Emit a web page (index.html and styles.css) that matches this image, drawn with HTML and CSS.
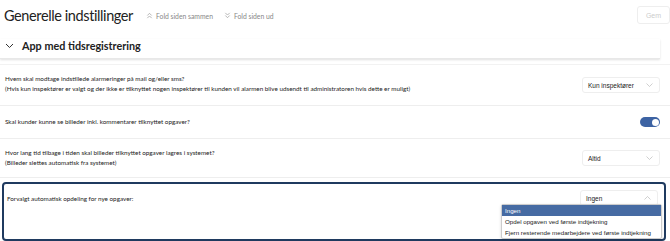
FILE: index.html
```html
<!DOCTYPE html>
<html lang="da">

<head>
    <meta charset="UTF-8">
    <meta name="viewport" content="width=device-width, initial-scale=1.0">
    <title>Generelle indstillinger</title>
    <link rel="stylesheet" href="styles.css">
</head>

<body>
    <div class="page-header">
        <h1>Generelle indstillinger</h1>
        <span class="fold-link">
            <svg width="7" height="7" viewBox="0 0 8 8"><path d="M1.5 4 L4 1.5 L6.5 4 M1.5 7 L4 4.5 L6.5 7" fill="none" stroke="#999" stroke-width="0.8"/></svg>
            Fold siden sammen
        </span>
        <span class="fold-link">
            <svg width="7" height="7" viewBox="0 0 8 8"><path d="M1.5 1 L4 3.5 L6.5 1 M1.5 4 L4 6.5 L6.5 4" fill="none" stroke="#999" stroke-width="0.8"/></svg>
            Fold siden ud
        </span>
        <button class="save-button">Gem</button>
    </div>

    <div class="section">
        <div class="section-header">
            <svg class="section-chevron" width="9" height="6" viewBox="0 0 9 6"><path d="M1 1 L4.5 4.5 L8 1" fill="none" stroke="#333" stroke-width="1"/></svg>
            <h2>App med tidsregistrering</h2>
        </div>

        <div class="setting-row row-first">
            <div class="setting-text">
                <p>Hvem skal modtage indstillede alarmeringer på mail og/eller sms?</p>
                <p>(Hvis kun inspektører er valgt og der ikke er tilknyttet nogen inspektører til kunden vil alarmen blive udsendt til administratoren hvis dette er muligt)</p>
            </div>
            <div class="select">
                <span>Kun inspektører</span>
                <svg width="7" height="4" viewBox="0 0 7 4"><path d="M0.5 0.5 L3.5 3.5 L6.5 0.5" fill="none" stroke="#bbb" stroke-width="0.7"/></svg>
            </div>
        </div>

        <div class="setting-row row-short">
            <div class="setting-text">
                <p>Skal kunder kunne se billeder inkl. kommentarer tilknyttet opgaver?</p>
            </div>
            <div class="toggle"><div class="toggle-knob"></div></div>
        </div>

        <div class="setting-row row-tall">
            <div class="setting-text">
                <p>Hvor lang tid tilbage i tiden skal billeder tilknyttet opgaver lagres i systemet?</p>
                <p>(Billeder slettes automatisk fra systemet)</p>
            </div>
            <div class="select">
                <span>Altid</span>
                <svg width="7" height="4" viewBox="0 0 7 4"><path d="M0.5 0.5 L3.5 3.5 L6.5 0.5" fill="none" stroke="#bbb" stroke-width="0.7"/></svg>
            </div>
        </div>

        <div class="setting-row row-active">
            <div class="setting-text">
                <p>Forvalgt automatisk opdeling for nye opgaver:</p>
            </div>
            <div class="select">
                <span>Ingen</span>
                <svg width="7" height="4" viewBox="0 0 7 4"><path d="M0.5 3.5 L3.5 0.5 L6.5 3.5" fill="none" stroke="#bbb" stroke-width="0.7"/></svg>
            </div>
            <ul class="dropdown">
                <li class="selected">Ingen</li>
                <li>Opdel opgaven ved første indtjekning</li>
                <li>Fjern resterende medarbejdere ved første indtjekning</li>
            </ul>
        </div>
    </div>
</body>

</html>
```

FILE: styles.css
```css
body {
    margin: 0;
    font-family: Lato, "Open Sans", sans-serif;
    color: #222;
    background: white;
    width: 670px;
    height: 241px;
    overflow: hidden;
}

.page-header {
    display: flex;
    align-items: center;
    gap: 11px;
    padding: 6px 0 0 4px;
    height: 18px;
}

h1 {
    margin: 0 2px 0 0;
    font-size: 14.5px;
    font-weight: 400;
    letter-spacing: -0.4px;
    color: #222;
}

.fold-link {
    display: flex;
    align-items: center;
    gap: 3px;
    font-size: 6.8px;
    color: #888;
    margin-top: 1px;
}

.save-button {
    margin-left: auto;
    font-family: "Liberation Sans", sans-serif;
    font-size: 7px;
    color: #ccc;
    background: white;
    border: 1px solid #eee;
    border-radius: 3px;
    width: 33px;
    height: 18px;
    padding: 0;
}

.section {
    margin-top: 15px;
}

.section-header {
    display: flex;
    align-items: center;
    gap: 8px;
    padding: 0 0 6px 5px;
    margin-right: 10px;
    box-shadow: 0 1px 2px rgba(0, 0, 0, 0.12);
    border-bottom: 1px solid #e8e8e8;
}

h2 {
    margin: 0;
    font-size: 10.8px;
    font-weight: 700;
    color: #222;
}

.setting-row {
    position: relative;
    display: flex;
    align-items: center;
    justify-content: space-between;
    padding: 0 10px 0 5px;
    border-bottom: 1px solid #eee;
}

.row-first {
    height: 40px;
    margin-top: 5px;
    border-top: 1px solid #f2f2f2;
}

.row-tall {
    height: 38px;
}

.row-short {
    height: 32px;
}

.setting-text p {
    margin: 0;
    font-size: 6.3px;
    line-height: 10.5px;
    color: #222;
}

.row-first .setting-text {
    margin-top: -2px;
}

.select {
    display: flex;
    align-items: center;
    justify-content: space-between;
    box-sizing: border-box;
    width: 78px;
    height: 16px;
    padding: 0 6px 0 5px;
    border: 1px solid #eee;
    border-radius: 3px;
    font-family: "Liberation Sans", sans-serif;
    font-size: 6.5px;
    color: #222;
}

.toggle {
    display: flex;
    justify-content: flex-end;
    align-items: center;
    box-sizing: border-box;
    width: 20px;
    height: 10px;
    padding: 0 1.5px;
    border-radius: 5px;
    background: #3d63a3;
}

.toggle-knob {
    width: 7px;
    height: 7px;
    border-radius: 50%;
    background: white;
}

.row-active {
    align-items: flex-start;
    box-sizing: border-box;
    height: 59px;
    margin: 4px 4px 0 2px;
    padding: 6px 6px 0 3px;
    border: 2px solid #1f3a5f;
    border-radius: 4px;
}

.row-active .setting-text {
    margin-top: 4px;
}

.dropdown {
    position: absolute;
    top: 20px;
    right: 2px;
    width: 159px;
    margin: 0;
    padding: 0;
    list-style: none;
    background: white;
    border: 1px solid #ccc;
    border-radius: 2px;
    box-shadow: 0 1px 3px rgba(0, 0, 0, 0.15);
    font-family: "Liberation Sans", sans-serif;
    font-size: 6.2px;
    color: #222;
    white-space: nowrap;
}

.dropdown li {
    height: 11px;
    line-height: 11px;
    padding: 0 3px;
}

.dropdown .selected {
    background: #466ba3;
    color: white;
}
```
